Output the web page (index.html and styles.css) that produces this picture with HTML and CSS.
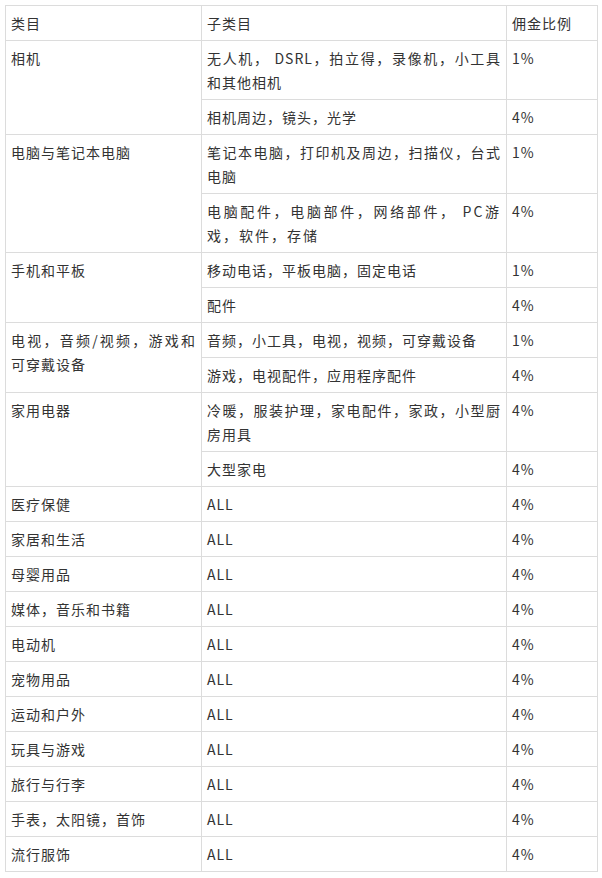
FILE: index.html
```html
<!DOCTYPE html>
<html lang="zh-CN">
<head>
<meta charset="utf-8">
<link rel="stylesheet" href="styles.css">
</head>
<body>
<table class="rates">
<colgroup><col class="c1"><col class="c2"><col class="c3"></colgroup>
<tr><td>类目</td><td>子类目</td><td>佣金比例</td></tr>
<tr><td rowspan="2">相机</td><td>无人机， DSRL，拍立得，录像机，小工具和其他相机</td><td>1%</td></tr>
<tr><td>相机周边，镜头，光学</td><td>4%</td></tr>
<tr><td rowspan="2">电脑与笔记本电脑</td><td>笔记本电脑，打印机及周边，扫描仪，台式电脑</td><td>1%</td></tr>
<tr><td class="wide">电脑配件，电脑部件，网络部件， PC游戏，软件，存储</td><td>4%</td></tr>
<tr><td rowspan="2">手机和平板</td><td>移动电话，平板电脑，固定电话</td><td>1%</td></tr>
<tr><td>配件</td><td>4%</td></tr>
<tr><td rowspan="2">电视，音频/视频，游戏和可穿戴设备</td><td>音频，小工具，电视，视频，可穿戴设备</td><td>1%</td></tr>
<tr><td>游戏，电视配件，应用程序配件</td><td>4%</td></tr>
<tr><td rowspan="2">家用电器</td><td>冷暖，服装护理，家电配件，家政，小型厨房用具</td><td>4%</td></tr>
<tr><td>大型家电</td><td>4%</td></tr>
<tr><td>医疗保健</td><td>ALL</td><td>4%</td></tr>
<tr><td>家居和生活</td><td>ALL</td><td>4%</td></tr>
<tr><td>母婴用品</td><td>ALL</td><td>4%</td></tr>
<tr><td>媒体，音乐和书籍</td><td>ALL</td><td>4%</td></tr>
<tr><td>电动机</td><td>ALL</td><td>4%</td></tr>
<tr><td>宠物用品</td><td>ALL</td><td>4%</td></tr>
<tr><td>运动和户外</td><td>ALL</td><td>4%</td></tr>
<tr><td>玩具与游戏</td><td>ALL</td><td>4%</td></tr>
<tr><td>旅行与行李</td><td>ALL</td><td>4%</td></tr>
<tr><td>手表，太阳镜，首饰</td><td>ALL</td><td>4%</td></tr>
<tr><td>流行服饰</td><td>ALL</td><td>4%</td></tr>
</table>
</body>
</html>
```
FILE: styles.css
```css
html, body {
  margin: 0;
  padding: 0;
  background: #fff;
}
body {
  padding: 5px;
  font-family: "Noto Sans CJK SC", "Noto Sans", sans-serif;
  font-size: 14px;
  line-height: 24px;
  letter-spacing: 1px;
  color: #333;
}
.rates {
  border-collapse: collapse;
  table-layout: fixed;
  width: 592px;
}
.c1 { width: 196px; }
.c2 { width: 305px; }
.c3 { width: 91px; }
.rates td {
  border: 1px solid #dcdcdc;
  padding: 5px 5px;
  vertical-align: top;
  text-align: justify;
  word-break: break-all;
}
.rates td.wide {
  letter-spacing: 2px;
}
```
